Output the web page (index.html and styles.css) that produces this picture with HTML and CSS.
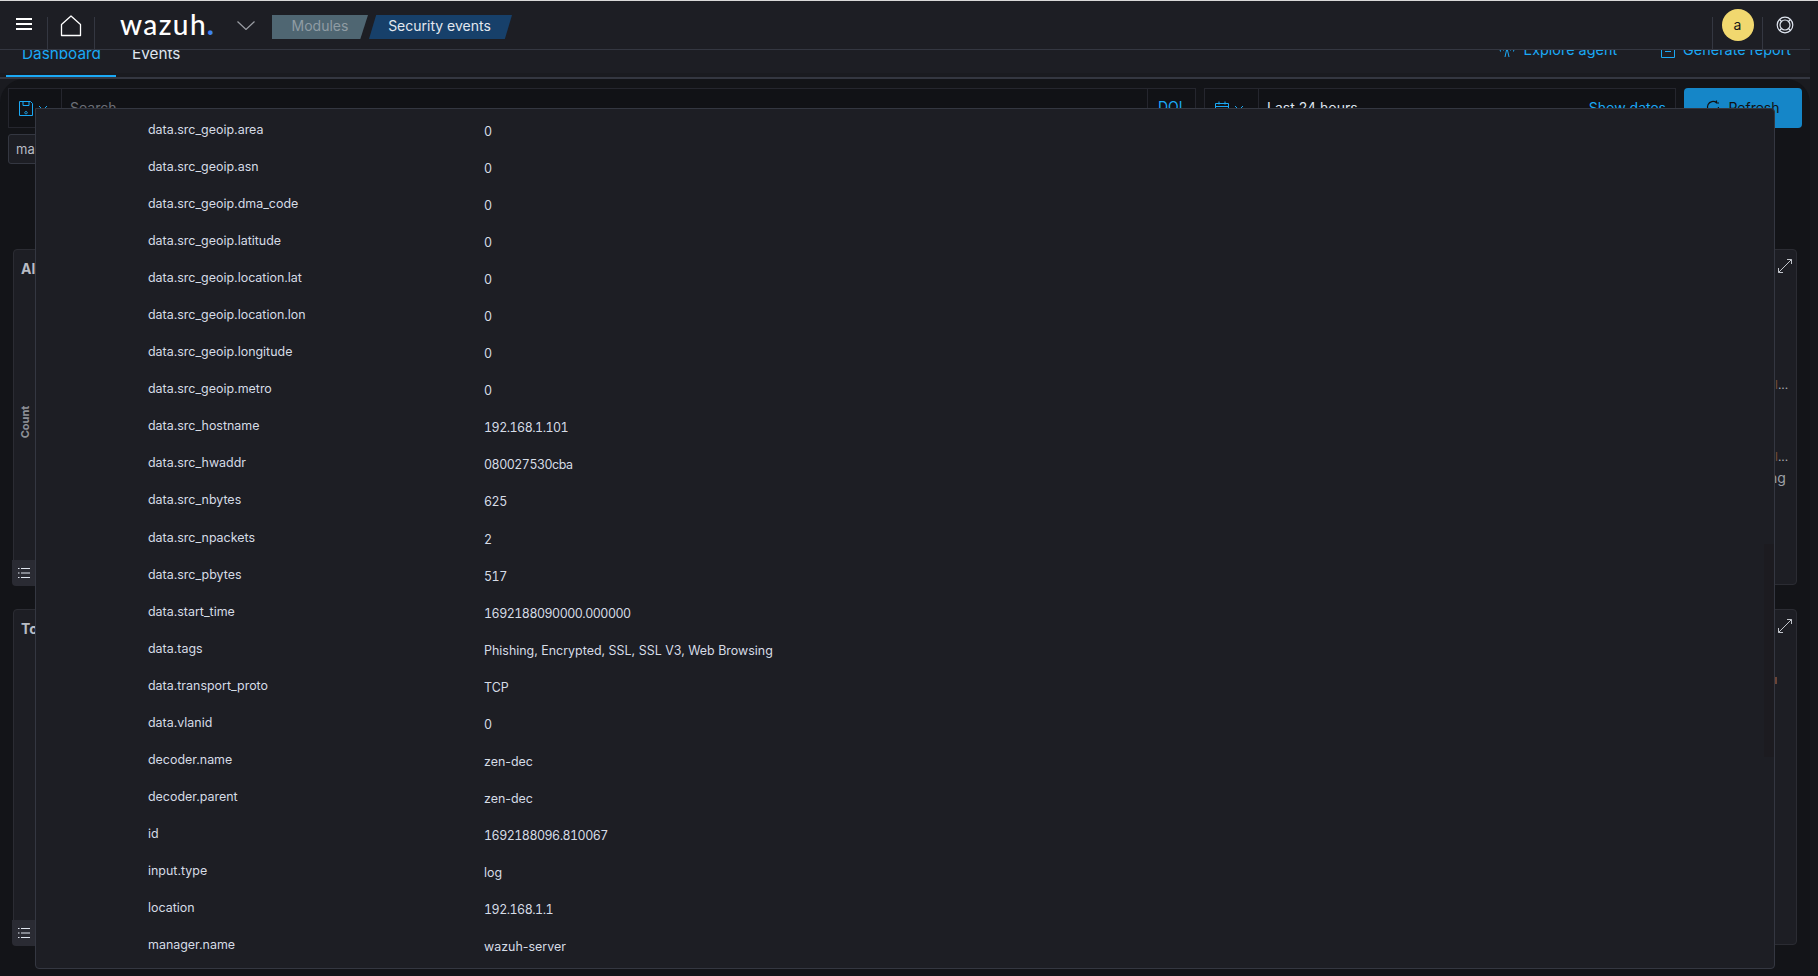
FILE: index.html
```html
<!DOCTYPE html>
<html lang="en">
<head>
<meta charset="utf-8">
<title>Security events</title>
<link rel="stylesheet" href="styles.css">
</head>
<body>
<div class="page">
  <header class="topbar">
    <div class="tb-cell tb-menu">
      <svg width="16" height="12" viewBox="0 0 16 12"><path d="M0 1h16M0 6h16M0 11h16" stroke="#fff" stroke-width="2"/></svg>
    </div>
    <div class="tb-cell tb-home">
      <svg width="22" height="22" viewBox="0 0 22 22" fill="none"><path d="M1.500 20.500V9.500L11 1l9.500 8.500v11z" stroke="#fff" stroke-width="1.300" stroke-linejoin="round"/></svg>
    </div>
    <div class="logo">wazuh<span class="logo-dot">.</span></div>
    <svg class="logo-chev" width="18" height="9" viewBox="0 0 18 9" fill="none"><path d="M.5.5 9 8.500 17.500.5" stroke="#9a9da3" stroke-width="1.200"/></svg>
    <div class="crumbs">
      <span class="crumb crumb-muted">Modules</span>
      <span class="crumb crumb-active">Security events</span>
    </div>
    <div class="tb-spacer"></div>
    <div class="tb-cell tb-user"><span class="avatar">a</span></div>
    <div class="tb-cell tb-help">
      <svg width="18" height="18" viewBox="0 0 18 18" fill="none" stroke="#dfe5ef" stroke-width="1.200"><circle cx="9" cy="9" r="7.800"/><circle cx="9" cy="9" r="5"/><path d="M3.500 3.500l2 2M14.500 3.500l-2 2M3.500 14.500l2-2M14.500 14.500l-2-2"/></svg>
    </div>
  </header>

  <nav class="tabs">
    <div class="tab tab-active"><span class="tab-label">Dashboard</span></div>
    <div class="tab"><span class="tab-label">Events</span></div>
    <div class="tb-spacer"></div>
    <div class="tab-link">
      <svg width="18" height="14" viewBox="0 0 18 14" fill="none" stroke="#1ba9f5" stroke-width="1"><path d="M7 14l2-9 2 9M5.500 1.500a5 5 0 0 0 0 6M12.500 1.500a5 5 0 0 1 0 6M2.500.5a9 9 0 0 0 0 8M15.500.5a9 9 0 0 1 0 8"/></svg>
      <span>Explore agent</span>
    </div>
    <div class="tab-link tab-link-last">
      <svg width="14" height="16" viewBox="0 0 14 16" fill="none" stroke="#1ba9f5" stroke-width="1"><path d="M.5.500h13v15H.5zM4 6h6M4 9.500h6"/></svg>
      <span>Generate report</span>
    </div>
  </nav>

  <div class="work">
    <div class="query-row">
      <div class="search">
        <div class="save">
          <svg width="14" height="15" viewBox="0 0 14 15" fill="none" stroke="#1ba9f5" stroke-width="1"><path d="M.5.500h11l2 2v12H.5zM4 .500v4h6v-4M7 10.500a1.200 1.200 0 1 0 .01 0"/></svg>
          <svg width="10" height="6" viewBox="0 0 10 6" fill="none" stroke="#1ba9f5"><path d="M1 1l4 4 4-4"/></svg>
        </div>
        <span class="placeholder">Search</span>
        <span class="dql">DQL</span>
      </div>
      <div class="dates">
        <div class="date-btn">
          <svg width="14" height="14" viewBox="0 0 14 14" fill="none" stroke="#1ba9f5"><path d="M.5 2.500h13v11H.5zM.5 5.500h13M4 .500v3M10 .500v3"/></svg>
          <svg width="10" height="6" viewBox="0 0 10 6" fill="none" stroke="#1ba9f5"><path d="M1 1l4 4 4-4"/></svg>
        </div>
        <span class="date-text">Last 24 hours</span>
        <span class="date-show">Show dates</span>
      </div>
      <button class="refresh">
        <svg width="14" height="14" viewBox="0 0 14 14" fill="none" stroke="#111" stroke-width="1.200"><path d="M12.500 7a5.500 5.500 0 1 1-2-4.300M10.500.500v2.500H13"/></svg>
        Refresh
      </button>
    </div>
    <div class="filter-row"><span class="filter">manager.name: wazuh-server</span></div>

    <section class="panel panel-a">
      <h3 class="panel-title">Alert groups evolution</h3>
      <span class="count-label">Count</span>
      <svg class="expand" width="14" height="14" viewBox="0 0 14 14" fill="none" stroke="#c2c5cb"><path d="M9 .500h4.500V5M13.500.500l-13 13M.500 9v4.500H5"/></svg>
      <span class="legend-frag frag-1"><span class="frag-l">l</span>...</span>
      <span class="legend-frag frag-2"><span class="frag-l">l</span>...</span>
      <span class="legend-frag frag-3">ng</span>
      <button class="legend-btn"><svg width="12" height="12" viewBox="0 0 12 12" stroke="#dfe5ef"><path d="M3 1.500h9M3 6h9M3 10.500h9M0 1.500h1.500M0 6h1.500M0 10.500h1.500"/></svg></button>
    </section>

    <section class="panel panel-b">
      <h3 class="panel-title">Top 5 agents</h3>
      <svg class="expand" width="14" height="14" viewBox="0 0 14 14" fill="none" stroke="#c2c5cb"><path d="M9 .500h4.500V5M13.500.500l-13 13M.500 9v4.500H5"/></svg>
      <span class="slice"></span>
      <button class="legend-btn"><svg width="12" height="12" viewBox="0 0 12 12" stroke="#dfe5ef"><path d="M3 1.500h9M3 6h9M3 10.500h9M0 1.500h1.500M0 6h1.500M0 10.500h1.500"/></svg></button>
    </section>
  </div>

  <div class="page-scroll"></div>

  <aside class="flyout">
    <div class="fly-scroll"></div>
    <dl class="rows">
      <div class="row"><dt>data.src_geoip.area</dt><dd class="num">0</dd></div>
      <div class="row"><dt>data.src_geoip.asn</dt><dd class="num">0</dd></div>
      <div class="row"><dt>data.src_geoip.dma_code</dt><dd class="num">0</dd></div>
      <div class="row"><dt>data.src_geoip.latitude</dt><dd class="num">0</dd></div>
      <div class="row"><dt>data.src_geoip.location.lat</dt><dd class="num">0</dd></div>
      <div class="row"><dt>data.src_geoip.location.lon</dt><dd class="num">0</dd></div>
      <div class="row"><dt>data.src_geoip.longitude</dt><dd class="num">0</dd></div>
      <div class="row"><dt>data.src_geoip.metro</dt><dd class="num">0</dd></div>
      <div class="row"><dt>data.src_hostname</dt><dd class="num">192.168.1.101</dd></div>
      <div class="row"><dt>data.src_hwaddr</dt><dd class="num">080027530cba</dd></div>
      <div class="row"><dt>data.src_nbytes</dt><dd class="num">625</dd></div>
      <div class="row"><dt>data.src_npackets</dt><dd class="num">2</dd></div>
      <div class="row"><dt>data.src_pbytes</dt><dd class="num">517</dd></div>
      <div class="row"><dt>data.start_time</dt><dd class="num">1692188090000.000000</dd></div>
      <div class="row"><dt>data.tags</dt><dd>Phishing, Encrypted, SSL, SSL V3, Web Browsing</dd></div>
      <div class="row"><dt>data.transport_proto</dt><dd>TCP</dd></div>
      <div class="row"><dt>data.vlanid</dt><dd class="num">0</dd></div>
      <div class="row"><dt>decoder.name</dt><dd>zen-dec</dd></div>
      <div class="row"><dt>decoder.parent</dt><dd>zen-dec</dd></div>
      <div class="row"><dt>id</dt><dd class="num">1692188096.810067</dd></div>
      <div class="row"><dt>input.type</dt><dd>log</dd></div>
      <div class="row"><dt>location</dt><dd class="num">192.168.1.1</dd></div>
      <div class="row"><dt>manager.name</dt><dd>wazuh-server</dd></div>
    </dl>
  </aside>
</div>
</body>
</html>
```

FILE: styles.css
```css
* { box-sizing: border-box; }
html, body { margin: 0; height: 100%; overflow: hidden; background: #1a1b20; }
body { font-family: Inter, "Liberation Sans", sans-serif; color: #dfe5ef; }

.page { position: relative; width: 1818px; height: 976px; overflow: hidden; padding-right: 8px; border-top: 1px solid #d9d9d9; background: #1a1b20; }

.topbar { position: relative; z-index: 2; height: 49px; display: flex; align-items: flex-start; background: #1d1e24; border-bottom: 1px solid #343741; }
.tb-cell { display: flex; align-items: center; justify-content: center; }
.tb-menu { width: 47px; height: 48px; padding-bottom: 2px; }
.tb-home { width: 48px; height: 32px; margin-top: 16px; border-left: 1px solid #343741; border-right: 1px solid #343741; }
.tb-home svg { margin-top: -15px; }
.logo { margin-left: 25px; width: 94px; font-family: Lato, Inter, sans-serif; font-size: 28px; line-height: 46px; font-weight: 500; letter-spacing: 1.400px; color: #fff; }
.logo-dot { color: #3d82f1; font-weight: 900; }
.logo-chev { margin: 20px 0 0 23px; }
.crumbs { display: flex; margin: 14px 0 0 17px; height: 24px; font-size: 14px; line-height: 22px; }
.crumb { display: block; text-align: center; }
.crumb-muted { width: 96px; background: #4f6672; color: #8f9ca4; clip-path: polygon(0 0, 100% 0, 92% 100%, 0 100%); }
.crumb-active { width: 143px; padding-right: 2px; margin-left: 1px; background: #17406a; color: #e3e8ef; clip-path: polygon(5% 0, 100% 0, 95% 100%, 0 100%); }
.tb-spacer { flex: 1; }
.tb-user { width: 50px; height: 32px; margin-top: 16px; border-left: 1px solid #343741; }
.avatar { width: 32px; height: 32px; margin-top: -16px; border-radius: 50%; background: #f1d86f; color: #141519; font-size: 14px; line-height: 32px; text-align: center; }
.tb-help { width: 48px; height: 32px; margin-top: 16px; padding-right: 4px; border-left: 1px solid #343741; }
.tb-help svg { margin-top: -16px; }

.tabs { position: relative; height: 29px; display: flex; align-items: flex-start; padding-left: 6px; background: linear-gradient(#1d1e24 23px, #1a1b20 23px); border-bottom: 2px solid #343741; overflow: hidden; }
.tab { height: 27px; padding: 0 16px; font-size: 15.300px; line-height: 19px; margin-top: -6px; color: #dfe5ef; }
.tab-active { width: 110px; color: #1ba9f5; box-shadow: inset 0 -2px 0 #1ba9f5; height: 33px; }
.tab-label { display: block; }
.tab-link { display: flex; align-items: center; gap: 8px; height: 19px; margin-top: -10px; font-size: 14.400px; color: #1ba9f5; }
.tab-link-last { margin-left: 44px; margin-right: 19px; }

.work { position: relative; height: 897px; padding: 9px 8px 0; background: #131418; border-radius: 24px 24px 0 0; }
.query-row { display: flex; gap: 8px; height: 40px; }
.search { flex: 1; display: flex; align-items: center; padding-bottom: 2px; background: #111216; border: 1px solid #25262e; font-size: 14px; }
.save { width: 53px; height: 38px; margin-bottom: -2px; display: flex; align-items: center; gap: 5px; padding-left: 10px; border-right: 1px solid #25262e; }
.placeholder { margin-left: 8px; color: #6c6f77; }
.dql { margin-left: auto; height: 38px; margin-bottom: -2px; width: 48px; padding: 9px 0 0 10px; border-left: 1px solid #25262e; color: #1ba9f5; }
.dates { width: 472px; display: flex; align-items: center; padding-bottom: 2px; background: #111216; border: 1px solid #25262e; font-size: 14px; }
.date-btn { width: 54px; height: 38px; margin-bottom: -2px; display: flex; align-items: center; gap: 5px; padding-left: 10px; border-right: 1px solid #25262e; }
.date-text { margin-left: 8px; color: #dfe5ef; }
.date-show { margin-left: auto; margin-right: 9px; color: #1ba9f5; }
.refresh { width: 118px; display: flex; align-items: center; justify-content: center; gap: 8px; padding-bottom: 3px; border: 0; border-radius: 4px; background: #1586c8; color: #111; font: 400 14px Inter, sans-serif; }
.filter-row { margin-top: 6px; height: 30px; }
.filter { display: block; width: 200px; height: 30px; padding: 6px 7px; border: 1px solid #343741; border-radius: 3px; background: #1d1e24; font-size: 13px; color: #b8bcc4; white-space: nowrap; overflow: hidden; }

.panel { position: relative; margin: 0 5px; background: #1d1e24; border: 1px solid #2b2c33; border-radius: 4px; }
.panel-a { margin-top: 85px; height: 336px; }
.panel-b { margin-top: 24px; height: 336px; }
.panel-title { margin: 0; padding: 11px 7px; font-size: 14px; line-height: 16px; font-weight: 700; color: #b8bcc4; white-space: nowrap; }
.count-label { position: absolute; left: -5px; top: 165px; font-size: 11px; font-weight: 700; color: #8e9198; transform: rotate(-90deg); transform-origin: center; }
.expand { position: absolute; right: 4px; top: 9px; }
.legend-frag { position: absolute; left: 1761px; color: #a6a9b0; font-size: 12px; line-height: 15px; }
.frag-l { color: #7a4f36; }
.frag-1 { top: 127px; }
.frag-2 { top: 199px; }
.frag-3 { left: 1755px; top: 220px; font-size: 14px; color: #9ea1a8; }
.slice { position: absolute; left: 1761px; top: 67px; width: 2px; height: 7px; background: #6b4436; }
.legend-btn { position: absolute; left: -2px; bottom: -2px; width: 28px; height: 26px; padding: 0 0 0 6px; display: flex; align-items: center; border: 0; border-radius: 0 0 0 4px; background: #2a2b33; }

.page-scroll { position: absolute; top: 49px; right: 0; width: 8px; height: 926px; background: #16171b; }

.flyout { position: absolute; z-index: 3; left: 35px; top: 107px; width: 1740px; height: 861px; padding-top: 11px; overflow: hidden; background: #1d1e24; border: 1px solid #343741; border-radius: 0 4px 4px 4px; }
.fly-scroll { position: absolute; right: 0; top: 435px; width: 10px; height: 213px; background: #1c1b20; }
.rows { margin: 0; padding: 0; }
.row { display: flex; height: 37.050px; padding-left: 112px; font-size: 12.450px; line-height: 20px; }
.row dt { width: 336px; color: #d6dce6; }
.row dd { margin: 2px 0 0; color: #d6dce6; }
.row .num { font-variant-numeric: tabular-nums; letter-spacing: -0.500px; }
```
